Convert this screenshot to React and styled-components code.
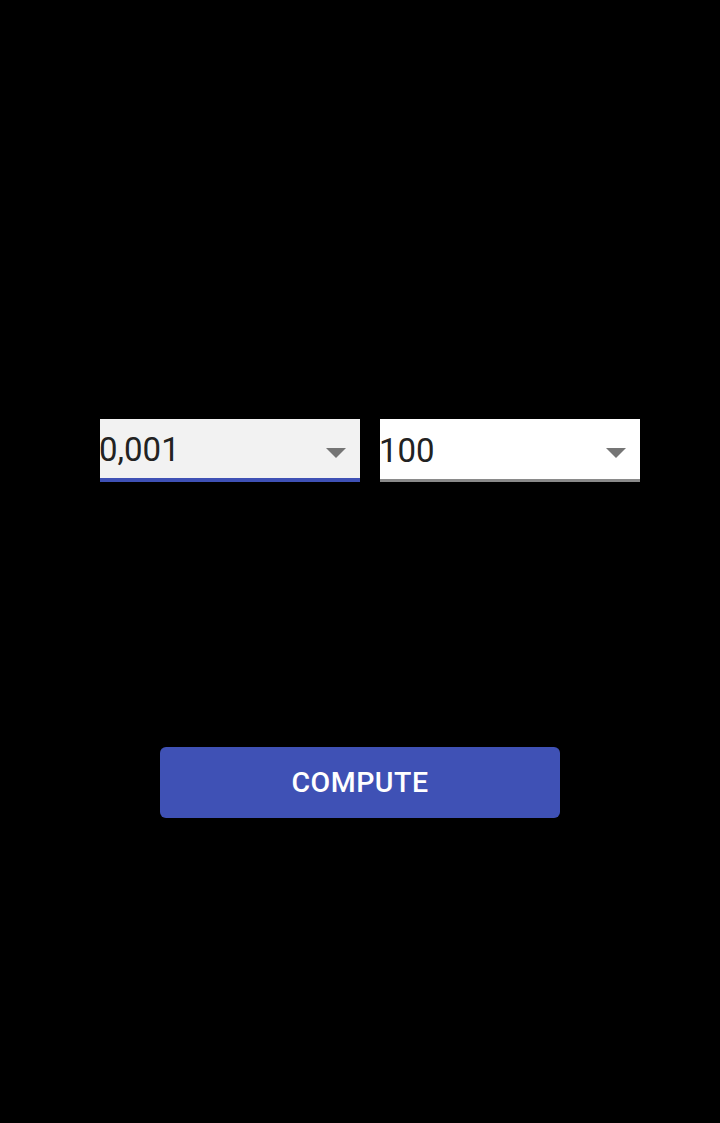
import React from 'react';
import styled, { createGlobalStyle } from 'styled-components';

const Global = createGlobalStyle`
  html, body {
    margin: 0;
    background: #000;
  }
  body {
    font-family: Roboto, "Noto Sans", sans-serif;
  }
`;

const Screen = styled.div`
  width: 720px;
  height: 1123px;
  background: #000;
  display: flex;
  flex-direction: column;
  align-items: center;
`;

const Row = styled.div`
  margin-top: 419px;
  margin-left: 20px;
  display: flex;
  gap: 20px;
`;

const Select = styled.div`
  width: 260px;
  box-sizing: border-box;
  display: flex;
  align-items: center;
  justify-content: space-between;
  padding-top: 2px;
  background: ${(p) => (p.$focused ? '#f2f2f2' : '#fff')};
  border-bottom: ${(p) => (p.$focused ? '4px solid #3f51b5' : '3px solid #8a8a8a')};
  height: 63px;
`;

const Value = styled.span`
  font-size: 33px;
  color: #222;
  margin-left: -1px;
`;

const Arrow = styled.span`
  width: 0;
  height: 0;
  border-left: 10px solid transparent;
  border-right: 10px solid transparent;
  border-top: 10px solid #757575;
  margin-right: 14px;
  margin-top: 6px;
`;

const Button = styled.button`
  margin-top: 265px;
  width: 400px;
  height: 71px;
  border: none;
  border-radius: 6px;
  background: #3f51b5;
  color: #fff;
  font-family: Roboto, sans-serif;
  font-weight: 500;
  font-size: 28.5px;
  letter-spacing: 0.5px;
`;

export default function App() {
  return (
    <Screen>
      <Global />
      <Row>
        <Select $focused>
          <Value>0,001</Value>
          <Arrow />
        </Select>
        <Select>
          <Value>100</Value>
          <Arrow />
        </Select>
      </Row>
      <Button>COMPUTE</Button>
    </Screen>
  );
}
